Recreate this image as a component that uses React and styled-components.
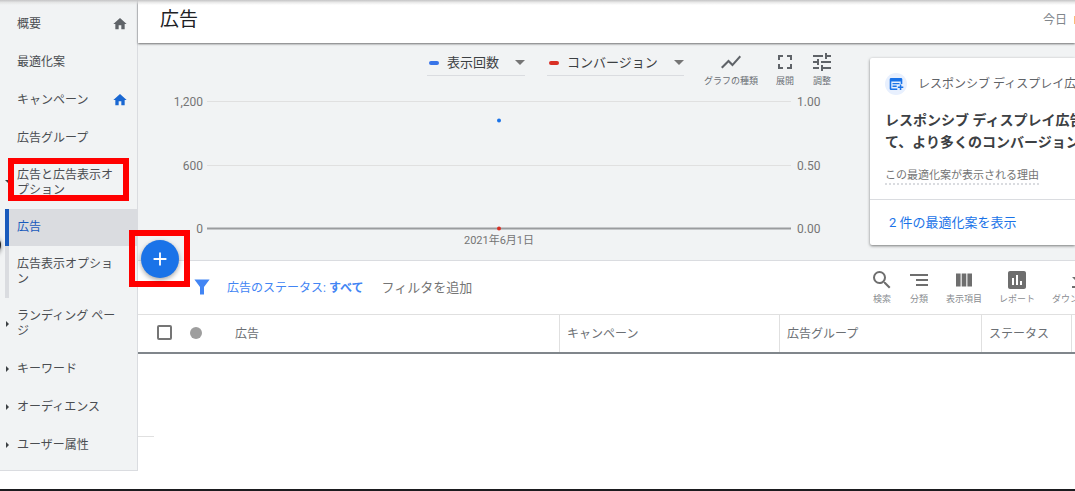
import React from "react";
import styled, { createGlobalStyle, css } from "styled-components";
import {
  MdHome,
  MdShowChart,
  MdFullscreen,
  MdTune,
  MdSearch,
  MdSegment,
  MdAssessment,
  MdFileDownload,
  MdAdd,
} from "react-icons/md";

const GlobalStyle = createGlobalStyle`
  *, *::before, *::after { box-sizing: border-box; }
  body {
    margin: 0;
    background: #fff;
    color: #4a4d51;
    font-family: Roboto, "Noto Sans CJK JP", sans-serif;
    font-size: 12px;
    overflow-x: hidden;
  }
  button, select, input { font: inherit; color: inherit; margin: 0; }
  button { padding: 0; border: 0; background: none; cursor: pointer; }
  a { color: inherit; text-decoration: none; }
  h1, h2, p, ul { margin: 0; padding: 0; font-weight: 400; }
  ul { list-style: none; }
  svg { display: block; flex: none; }
`;

const Page = styled.div`
  position: relative;
  padding-bottom: 18px;
  border-bottom: 2px solid #1b1c1f;
  overflow: hidden;
`;

const TopShadow = styled.div`
  position: absolute;
  inset: 0 0 auto;
  height: 5px;
  z-index: 5;
  background: linear-gradient(#c4c4c5, rgba(220, 220, 220, 0.6) 50%, transparent);
`;

const Columns = styled.div`
  display: flex;
  align-items: stretch;
`;

const Sidebar = styled.nav`
  position: relative;
  flex: none;
  width: 138px;
  padding: 5px 0 6px;
  background: #f1f3f4;
  border-right: 1px solid #dadce0;
  border-bottom: 1px solid #dadce0;
`;

const PanelHandle = styled.span`
  position: absolute;
  left: -19px;
  top: 235px;
  width: 20px;
  height: 20px;
  border-radius: 50%;
  background: #202124;
  box-shadow: 0 1px 4px rgba(0, 0, 0, 0.5);
`;

const NavItem = styled.li`
  position: relative;
  height: ${(p) => (p.$tall ? 52 : p.$nested ? 37 : 38)}px;
  ${(p) =>
    p.$nested &&
    css`
      margin-left: 5px;
      border-left: 4px solid ${p.$active ? "#185abc" : "#dadce0"};
      background: ${p.$active ? "#dadce0" : "none"};
      color: ${p.$active ? "#185abc" : "inherit"};
    `}
`;

const NavLink = styled.a`
  display: flex;
  align-items: center;
  justify-content: space-between;
  height: 100%;
  padding: 0 9px 0 ${(p) => (p.$nested ? 8 : 17)}px;
  line-height: 15px;
`;

const NavText = styled.span`
  max-width: 101px;
`;

const Arrow = styled.span`
  position: absolute;
  left: 6px;
  top: 50%;
  margin-top: -3px;
  border: solid transparent;
  ${(p) =>
    p.$open
      ? css`
          left: 5px;
          border-width: 3px 3px 0;
          border-top-color: #3c4043;
        `
      : css`
          border-width: 3px 0 3px 3px;
          border-left-color: #3c4043;
        `}
`;

const Highlight = styled.span`
  position: absolute;
  inset: 1px 8px 8px 8px;
  border: 6px solid #f00;
  pointer-events: none;
`;

const Main = styled.main`
  flex: 1;
  min-width: 0;
`;

const Header = styled.header`
  position: relative;
  z-index: 1;
  display: flex;
  align-items: center;
  justify-content: space-between;
  height: 43px;
  padding: 0 0 3px 22px;
  background: #fff;
  box-shadow: 0 1px 2px rgba(0, 0, 0, 0.55);
`;

const Title = styled.h1`
  font-size: 19px;
  line-height: 24px;
  color: #202124;
`;

const DateRange = styled.div`
  display: flex;
  justify-content: space-between;
  width: 32px;
  line-height: 18px;
  color: #80868b;
`;

const DateMark = styled.span`
  width: 1px;
  height: 8px;
  align-self: center;
  background: #fbbc76;
`;

const Overview = styled.section`
  position: relative;
  display: flex;
  height: 218px;
  background: #f1f3f4;
  border-bottom: 1px solid #dadce0;
`;

const ChartPanel = styled.div`
  flex: 1;
  min-width: 0;
`;

const ChartTools = styled.div`
  display: flex;
  justify-content: flex-end;
  align-items: flex-start;
  height: 52px;
  padding: 7px 38px 0 0;
`;

const MetricPicker = styled.label`
  position: relative;
  display: flex;
  align-items: center;
  width: ${(p) => p.$width}px;
  height: 26px;
  margin-right: ${(p) => p.$gap}px;
  border-bottom: 1px solid #dadce0;
  &::before {
    content: "";
    width: 10px;
    height: 4px;
    margin-left: 2px;
    border-radius: 2px;
    background: ${(p) => p.$color};
  }
  &::after {
    content: "";
    position: absolute;
    right: 0;
    top: 10px;
    border: solid transparent;
    border-width: 5px 5px 0;
    border-top-color: #757575;
    pointer-events: none;
  }
`;

const MetricSelect = styled.select`
  flex: 1;
  min-width: 0;
  height: 25px;
  padding: 0 0 0 8px;
  border: 0;
  appearance: none;
  background: none;
  font-size: 13px;
  color: #3c4043;
`;

const ToolList = styled.div`
  display: flex;
  gap: 17px;
`;

const ToolButton = styled.button`
  display: flex;
  flex: none;
  flex-direction: column;
  align-items: center;
  min-width: 20px;
  font-size: 9px;
  line-height: 14px;
  white-space: nowrap;
  color: ${(p) => (p.$muted ? "#8a8d91" : "#6b6f74")};
  svg {
    width: 24px;
    height: 24px;
    margin: 0 -2px;
    color: ${(p) => (p.$muted ? "#6e6e6e" : "#5f6368")};
  }
`;

const Chart = styled.div`
  display: grid;
  grid-template-columns: 65px 1fr 75px;
  column-gap: 4px;
`;

const Scale = styled.div`
  display: flex;
  flex-direction: column;
  justify-content: space-between;
  height: 141px;
  padding-left: ${(p) => (p.$align === "left" ? 2 : 0)}px;
  line-height: 14px;
  text-align: ${(p) => p.$align};
  color: #757575;
`;

const Plot = styled.svg`
  width: 100%;
  height: 141px;
  overflow: visible;
`;

const DateLabel = styled.div`
  grid-column: 2;
  margin-top: -3px;
  font-size: 11px;
  line-height: 16px;
  text-align: center;
  color: #757575;
`;

const Card = styled.aside`
  flex: none;
  width: 205px;
  height: 187px;
  margin-top: 15px;
  background: #fff;
  border-radius: 2px 0 0 2px;
  box-shadow: 0 1px 3px rgba(0, 0, 0, 0.5);
  white-space: nowrap;
`;

const CardBody = styled.div`
  height: 142px;
  padding: 15px 0 0 15px;
  overflow: hidden;
  border-bottom: 1px solid #dadce0;
`;

const CardKind = styled.div`
  display: flex;
  align-items: center;
  gap: 11px;
  height: 22px;
  line-height: 20px;
  color: #5f6368;
`;

const CardTitle = styled.h2`
  margin-top: 14px;
  font-size: 14px;
  line-height: 22px;
  font-weight: 700;
  color: #3c4043;
`;

const Reason = styled.button`
  display: block;
  margin-top: 16px;
  border-bottom: 2px dotted #dadce0;
  font-size: 11px;
  line-height: 14px;
  color: #757575;
`;

const CardLink = styled.a`
  display: block;
  padding: 12px 0 0 19px;
  font-size: 13px;
  line-height: 22px;
  color: #1a73e8;
`;

const CreateBox = styled.div`
  position: absolute;
  left: -9px;
  bottom: -27px;
  z-index: 2;
  display: grid;
  place-items: center;
  width: 61px;
  height: 57px;
  border: 6px solid #f00;
`;

const CreateButton = styled.button`
  display: grid;
  place-items: center;
  width: 38px;
  height: 38px;
  border-radius: 50%;
  background: #1a73e8;
  color: #fff;
  box-shadow: 0 2px 5px rgba(0, 0, 0, 0.35);
`;

const FilterBar = styled.div`
  display: flex;
  align-items: center;
  height: 53px;
  padding: 0 0 2px 56px;
`;

const FilterChip = styled.button`
  margin-left: 17px;
  color: #4285f4;
  b {
    font-weight: 700;
  }
`;

const AddFilter = styled.button`
  margin-left: 18px;
  font-size: 13px;
  color: #757575;
`;

const TableTools = styled(ToolList)`
  width: 203px;
  margin-left: auto;
  overflow: hidden;
`;

const AdsTable = styled.table`
  width: 100%;
  table-layout: fixed;
  border-collapse: separate;
  border-spacing: 0;
  border-top: 1px solid #e0e0e0;
  border-bottom: 2px solid #80868b;
`;

const HeadCell = styled.th`
  width: ${(p) => (p.$width ? `${p.$width}px` : "auto")};
  height: 37px;
  padding: 0 0 2px 7px;
  font-weight: 400;
  text-align: left;
  color: #6b6f74;
  border-left: ${(p) => (p.$plain ? "0" : "1px solid #e0e0e0")};
`;

const NextColumn = styled.td`
  width: 4px;
  padding: 0;
  border-left: 1px solid #e0e0e0;
`;

const SelectAll = styled.input`
  display: block;
  appearance: none;
  width: 15px;
  height: 15px;
  margin: 0 0 0 12px;
  border: 2px solid #757575;
  border-radius: 2px;
  background: #fff;
  &:checked {
    background: #1a73e8;
  }
`;

const StatusDot = styled.span`
  display: block;
  width: 12px;
  height: 12px;
  border-radius: 50%;
  background: #9e9e9e;
`;

const EmptyRows = styled.div`
  width: 16px;
  height: 83px;
  border-bottom: 1px solid #e0e0e0;
`;

const navigation = [
  { text: "概要", home: "#5f6368" },
  { text: "最適化案" },
  { text: "キャンペーン", home: "#1967d2" },
  { text: "広告グループ" },
  { text: "広告と広告表示オプション", tall: true, arrow: true, open: true, highlight: true },
  { text: "広告", nested: true, active: true },
  { text: "広告表示オプション", nested: true, tall: true },
  { text: "ランディング ページ", tall: true, arrow: true },
  { text: "キーワード", arrow: true },
  { text: "オーディエンス", arrow: true },
  { text: "ユーザー属性", arrow: true },
];

const FunnelIcon = () => (
  <svg width="16" height="16" viewBox="0 0 16 16" fill="#4285f4" aria-hidden="true">
    <path d="M.4.5h15.2L10 8v7.5H6V8z" />
  </svg>
);

const ColumnsIcon = () => (
  <svg viewBox="0 0 24 24" fill="currentColor" aria-hidden="true">
    <path d="M4 5.500h4.600v13H4zM9.700 5.500h4.600v13H9.700zM15.400 5.500H20v13h-4.600z" />
  </svg>
);

const ResponsiveAdIcon = () => (
  <svg width="22" height="22" viewBox="0 0 22 22" aria-hidden="true">
    <circle cx="11" cy="11" r="11" fill="#e8f0fe" />
    <path
      fill="#1a73e8"
      d="M6 5h10a1.300 1.300 0 0 1 1.300 1.300V11h-1.600V8.600H6.300v6.800h6v1.600H6a1.300 1.300 0 0 1-1.300-1.300V6.300A1.300 1.300 0 0 1 6 5z"
    />
    <path fill="#1a73e8" d="M7.500 10h7v1.300h-7zM7.500 12.600h4.200v1.300H7.500zM14.800 11.500h1.500v2h2v1.500h-2v2h-1.500v-2h-2v-1.500h2z" />
  </svg>
);

function Metric({ label, color, width, gap }) {
  return (
    <MetricPicker $color={color} $width={width} $gap={gap}>
      <MetricSelect aria-label={label} defaultValue={label}>
        <option>{label}</option>
      </MetricSelect>
    </MetricPicker>
  );
}

function Tool({ icon: Icon, label, muted }) {
  return (
    <ToolButton type="button" $muted={muted}>
      <Icon />
      {label}
    </ToolButton>
  );
}

export default function App() {
  return (
    <Page lang="ja">
      <GlobalStyle />
      <TopShadow />
      <Columns>
        <Sidebar>
          <ul>
            {navigation.map((item) => (
              <NavItem key={item.text} $tall={item.tall} $nested={item.nested} $active={item.active}>
                {item.arrow && <Arrow $open={item.open} />}
                <NavLink href="#" $nested={item.nested}>
                  <NavText>{item.text}</NavText>
                  {item.home && <MdHome size={16} color={item.home} />}
                </NavLink>
                {item.highlight && <Highlight />}
              </NavItem>
            ))}
          </ul>
          <PanelHandle />
        </Sidebar>
        <Main>
          <Header>
            <Title>広告</Title>
            <DateRange>
              今日
              <DateMark />
            </DateRange>
          </Header>
          <Overview>
            <ChartPanel>
              <ChartTools>
                <Metric label="表示回数" color="#3874e8" width={98} gap={22} />
                <Metric label="コンバージョン" color="#d93025" width={137} gap={20} />
                <ToolList>
                  <Tool icon={MdShowChart} label="グラフの種類" />
                  <Tool icon={MdFullscreen} label="展開" />
                  <Tool icon={MdTune} label="調整" />
                </ToolList>
              </ChartTools>
              <Chart>
                <Scale $align="right">
                  <span>1,200</span>
                  <span>600</span>
                  <span>0</span>
                </Scale>
                <Plot role="img" aria-label="表示回数とコンバージョン">
                  <line x1="0" x2="100%" y1="6.500" y2="6.500" stroke="#e0e0e0" />
                  <line x1="0" x2="100%" y1="70.500" y2="70.500" stroke="#e0e0e0" />
                  <line x1="0" x2="100%" y1="133.500" y2="133.500" stroke="#9a9c9e" strokeWidth="2" />
                  <circle cx="50%" cy="25.500" r="2" fill="#1a73e8" />
                  <circle cx="50%" cy="133.500" r="2" fill="#d93025" />
                </Plot>
                <Scale $align="left">
                  <span>1.00</span>
                  <span>0.50</span>
                  <span>0.00</span>
                </Scale>
                <DateLabel>2021年6月1日</DateLabel>
              </Chart>
            </ChartPanel>
            <Card>
              <CardBody>
                <CardKind>
                  <ResponsiveAdIcon />
                  レスポンシブ ディスプレイ広告
                </CardKind>
                <CardTitle>
                  レスポンシブ ディスプレイ広告
                  <br />
                  て、より多くのコンバージョン
                </CardTitle>
                <Reason type="button">この最適化案が表示される理由</Reason>
              </CardBody>
              <CardLink href="#">2 件の最適化案を表示</CardLink>
            </Card>
            <CreateBox>
              <CreateButton type="button" aria-label="作成">
                <MdAdd size={22} />
              </CreateButton>
            </CreateBox>
          </Overview>
          <FilterBar>
            <FunnelIcon />
            <FilterChip type="button">
              広告のステータス: <b>すべて</b>
            </FilterChip>
            <AddFilter type="button">フィルタを追加</AddFilter>
            <TableTools>
              <Tool icon={MdSearch} label="検索" muted />
              <Tool icon={MdSegment} label="分類" muted />
              <Tool icon={ColumnsIcon} label="表示項目" muted />
              <Tool icon={MdAssessment} label="レポート" muted />
              <Tool icon={MdFileDownload} label="ダウンロード" muted />
            </TableTools>
          </FilterBar>
          <AdsTable>
            <thead>
              <tr>
                <HeadCell $plain $width={45}>
                  <SelectAll type="checkbox" aria-label="すべて選択" />
                </HeadCell>
                <HeadCell $plain $width={45}>
                  <StatusDot />
                </HeadCell>
                <HeadCell $plain>広告</HeadCell>
                <HeadCell $width={220}>キャンペーン</HeadCell>
                <HeadCell $width={202}>広告グループ</HeadCell>
                <HeadCell $width={90}>ステータス</HeadCell>
                <NextColumn />
              </tr>
            </thead>
          </AdsTable>
          <EmptyRows />
        </Main>
      </Columns>
    </Page>
  );
}
